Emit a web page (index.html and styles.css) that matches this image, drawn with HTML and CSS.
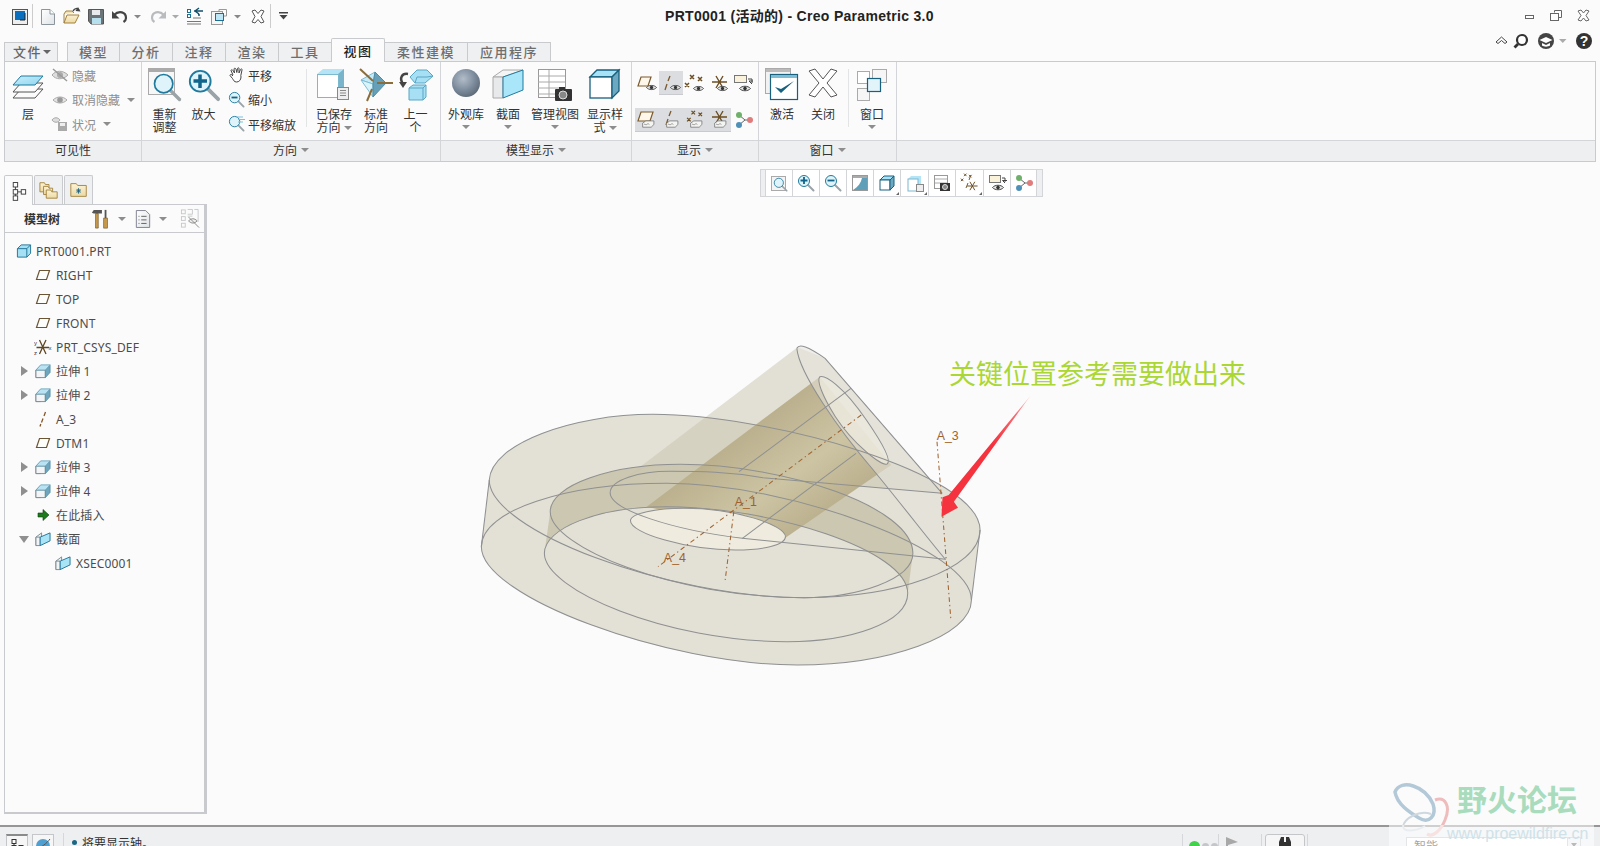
FILE: index.html
```html
<!DOCTYPE html>
<html lang="zh">
<head>
<meta charset="utf-8">
<title>PRT0001 (活动的) - Creo Parametric 3.0</title>
<link rel="stylesheet" href="styles.css">
</head>
<body>
<svg class="defs" aria-hidden="true">
  <defs>
    <linearGradient id="blue" x1="0" y1="0" x2="1" y2="1"><stop offset="0" stop-color="#c9eefb"/><stop offset="1" stop-color="#8fd6f0"/></linearGradient>
    <linearGradient id="paper" x1="0" y1="0" x2="1" y2="1"><stop offset="0" stop-color="#ffffff"/><stop offset="1" stop-color="#dfe3e6"/></linearGradient>
    <linearGradient id="folder" x1="0" y1="0" x2="0" y2="1"><stop offset="0" stop-color="#fdf3d6"/><stop offset="1" stop-color="#ecd9a4"/></linearGradient>
    <radialGradient id="sphere" cx=".4" cy=".35" r=".7"><stop offset="0" stop-color="#b3bdc9"/><stop offset=".6" stop-color="#7c8b9c"/><stop offset="1" stop-color="#5b6774"/></radialGradient>
    <linearGradient id="bandfill" gradientUnits="userSpaceOnUse" x1="780" y1="340" x2="1010" y2="640"><stop offset="0" stop-color="#bbb08e"/><stop offset=".5" stop-color="#ccc4a3"/><stop offset=".9" stop-color="#bbb08e"/></linearGradient>
    <linearGradient id="arrowfill" gradientUnits="userSpaceOnUse" x1="1658" y1="204" x2="1400" y2="560"><stop offset="0" stop-color="#fbd3d3"/><stop offset=".15" stop-color="#f76a70"/><stop offset=".4" stop-color="#f5333f"/><stop offset="1" stop-color="#f5333f"/></linearGradient>

    <symbol id="plane" viewBox="0 0 16 12"><path d="M4.500 1.500H14.500L11.500 10.500H1.500Z" fill="#fdfdfb" stroke="#6b5534" stroke-width="1.200"/></symbol>
    <symbol id="axis" viewBox="0 0 16 16"><path d="M10.500 1L9 5M8 7.500L6.500 11.500M5.800 13L5 15.500" fill="none" stroke="#84592a" stroke-width="1.300"/></symbol>
    <symbol id="csys" viewBox="0 0 18 16"><path d="M5.500 1L12 15M12 1L5.500 15M2.500 8.500H15" fill="none" stroke="#5f4622" stroke-width="1.300"/><text x="0" y="6" class="tiny">y</text><text x="0" y="15.500" class="tiny">z</text><text x="14.500" y="11" class="tiny">x</text></symbol>
    <symbol id="solid" viewBox="0 0 17 17"><path d="M1 7.500L6 3V15.500H1Z" fill="#eef0f1" stroke="#7b8a92"/><path d="M1 7.500H11V15.500H1Z" fill="#f3f4f5" stroke="#7b8a92"/><path d="M11 7.500L16 2V10L11 15.500Z" fill="#6ea6be" stroke="#5d93aa"/><path d="M1 7.500L6 2H16L11 7.500Z" fill="#b9e3f3" stroke="#6ea6be"/></symbol>
    <symbol id="root" viewBox="0 0 17 17"><path d="M1.500 6L5.500 2H15.500V11L11.500 15H1.500Z" fill="#a6e0f4" stroke="#1f7396"/><path d="M11.500 6V15M11.500 6H1.500M11.500 6L15.500 2" fill="none" stroke="#1f7396"/></symbol>
    <symbol id="sect" viewBox="0 0 17 17"><path d="M1 6.500L7 2V11.500L1 15.500Z" fill="#eef0f1" stroke="#7b8a92"/><path d="M1 6.500H5.500V15.500H1Z" fill="#f2f3f4" stroke="#7b8a92"/><path d="M5.500 6.500L16 2V10.500L5.500 15.500Z" fill="#a9e3f6" stroke="#1f7396"/></symbol>
    <symbol id="mag" viewBox="0 0 36 36"><path d="M21 21L33 33" stroke="#9aa3a8" stroke-width="4" stroke-linecap="round"/><circle cx="14" cy="14" r="11" fill="#dff3fa" stroke="#1f7a9e" stroke-width="2"/></symbol>
    <symbol id="eye" viewBox="0 0 12 7"><path d="M.5 3.500C3 .5 9 .5 11.500 3.500C9 6.500 3 6.500 .5 3.500Z" fill="#e8e8e8" stroke="#444"/><circle cx="6" cy="3.500" r="1.800" fill="#333"/></symbol>
    <symbol id="nodes" viewBox="0 0 18 18"><path d="M4 4L10 9L4 14M10 9H15" fill="none" stroke="#666"/><circle cx="4" cy="4" r="3" fill="#6fb06a"/><circle cx="4" cy="14" r="3" fill="#4f90b8"/><circle cx="15" cy="9" r="3" fill="#e07c7c"/></symbol>
    <symbol id="tag" viewBox="0 0 16 10"><path d="M1.500 3.500L5 1H14V5L11 8H1.500Z" fill="#f4f4f2" stroke="#777" stroke-width=".9"/><path d="M3 5C4 4 5 6 6 5S8 4 9 5" fill="none" stroke="#777" stroke-width=".8"/></symbol>
    <symbol id="csysSmall" viewBox="0 0 20 14"><path d="M7 1L14 13M14 1L7 13M3 7H18" fill="none" stroke="#6b4d22" stroke-width="1.400"/></symbol>
    <symbol id="xpts" viewBox="0 0 20 16"><path d="M6 1L10 5M10 1L6 5M14 3L18 7M18 3L14 7M1 9L5 13M5 9L1 13" fill="none" stroke="#6b4d22" stroke-width="1.500"/></symbol>
  </defs>
</svg>
<div class="app">

  <header class="titlebar">
    <svg class="qat" viewBox="0 0 300 34" width="300" height="34" aria-label="快速访问工具栏">
      <rect x="12.500" y="9.500" width="15" height="15" fill="#eee" stroke="#555"/>
      <rect x="15" y="11" width="10" height="9" fill="#0b6fc0"/>
      <path d="M20 20H25V13" fill="none" stroke="#222"/>
      <path d="M32.500 4V28" stroke="#ccc"/>
      <path d="M41.500 9.500H50L54.500 14V24.500H41.500Z" fill="url(#paper)" stroke="#8b959b"/>
      <path d="M50 9.500V14H54.500" fill="#fff" stroke="#8b959b"/>
      <path d="M64 14V23H75L79 15H67L64 23" fill="url(#folder)" stroke="#a2823d"/>
      <path d="M64 14L66 11H72L74 13" fill="#f3e4b5" stroke="#a2823d"/>
      <path d="M73 11C75 8 77 8 79 10" fill="none" stroke="#444" stroke-width="1.500"/>
      <path d="M78 7L80.500 11.500L75.500 11Z" fill="#444"/>
      <path d="M88.500 9.500H103.500V24H91L88.500 21Z" fill="#6b7479" stroke="#555"/>
      <rect x="92" y="10" width="8" height="5" fill="#e8ebed"/>
      <rect x="92" y="18" width="9" height="6" fill="#b7e0ef"/>
      <path d="M114 15C119 10 126 12 126 18C126 20 125 21 123.500 22" fill="none" stroke="#444" stroke-width="2.200"/>
      <path d="M112 11V18.500H119.500Z" fill="#444"/>
      <path d="M134 15H141L137.500 18.500Z" fill="#888"/>
      <path d="M164 15C159 10 152 12 152 18C152 20 153 21 154.500 22" fill="none" stroke="#b9bcbf" stroke-width="2.200"/>
      <path d="M166 11V18.500H158.500Z" fill="#b9bcbf"/>
      <path d="M172 15H179L175.500 18.500Z" fill="#aaa"/>
      <g fill="#fff" stroke="#1c6f94"><rect x="187.500" y="9.500" width="3" height="3"/><rect x="187.500" y="14.500" width="3" height="3"/></g>
      <path d="M194 11H203M199 8L195 11L199 14M198 15H200" fill="none" stroke="#15506b" stroke-width="1.400"/>
      <path d="M193 18H201M187 21.500H201M187 24H201" stroke="#777"/>
      <rect x="211.500" y="11.500" width="11" height="13" fill="#f6f6f6" stroke="#999"/>
      <rect x="215.500" y="13.500" width="8" height="7" fill="#bfe6f4" stroke="#1c6f94"/>
      <path d="M219 11.500V9.500H226.500V16H224" fill="none" stroke="#999"/>
      <path d="M234 15H241L237.500 18.500Z" fill="#888"/>
      <path d="M252 11L255 10L258 13.500L261 10L264 11L261 16.500L264 22L261 23L258 19.500L255 23L252 22L255 16.500Z" fill="#fff" stroke="#555"/>
      <path d="M270.500 4V28" stroke="#ccc"/>
      <path d="M279 12H288V13.500H279ZM279.500 15H287.500L283.500 19.500Z" fill="#444"/>
    </svg>
    <h1 class="title">PRT0001 (活动的) - Creo Parametric 3.0</h1>
    <svg class="winctl" viewBox="0 0 90 34" width="90" height="34" aria-label="窗口控制">
      <rect x="15.500" y="15.500" width="8" height="3" fill="#fff" stroke="#666"/>
      <path d="M44.500 12.500V10.500H51.500V17.500H49" fill="#fff" stroke="#666"/>
      <rect x="40.500" y="13.500" width="8" height="7" fill="#fff" stroke="#666"/>
      <path d="M68 11L71 10L73.500 13L76 10L79 11L76 15.500L79 20L76 21L73.500 18L71 21L68 20L71 15.500Z" fill="#fff" stroke="#666"/>
    </svg>
  </header>

  <nav class="tabbar">
    <div class="tab tab-file">文件<i class="caret caret-file"></i></div>
    <div class="tabs">
      <div class="tab">模型</div>
      <div class="tab">分析</div>
      <div class="tab">注释</div>
      <div class="tab">渲染</div>
      <div class="tab">工具</div>
      <div class="tab tab-active">视图</div>
      <div class="tab tab-wide">柔性建模</div>
      <div class="tab tab-wide">应用程序</div>
    </div>
    <svg class="helpers" viewBox="0 0 100 22" width="100" height="22" aria-label="帮助工具">
      <path d="M0 11L5.500 6L11 11L9 12.500L5.500 9.500L2 12.500Z" fill="#fff" stroke="#444"/>
      <circle cx="26" cy="9" r="5" fill="#fff" stroke="#333" stroke-width="2.200"/>
      <path d="M22 13L18.500 16.500" stroke="#333" stroke-width="2.800"/>
      <circle cx="50" cy="10" r="8" fill="#444"/>
      <path d="M43.500 9L50 6L56.500 9L50 12Z" fill="#fff"/>
      <path d="M46 12V14.500C48 16 52 16 54 14.500V12L50 14Z" fill="#fff"/>
      <path d="M63 8H70.500L66.750 12Z" fill="#aaa"/>
      <circle cx="88" cy="10" r="8" fill="#333"/>
      <text x="88" y="14.500" class="helpmark">?</text>
    </svg>
  </nav>

  <section class="ribbon">
    <div class="group g-vis">
      <div class="group-body">
        <div class="big w40">
          <svg class="ico" viewBox="0 0 34 34" width="34" height="34"><path d="M10 21H32L24 30H2Z" fill="none" stroke="#555"/><path d="M10 15H32L24 24H2Z" fill="#fbfbfc" stroke="#555"/><path d="M10 8H32L24 17H2Z" fill="url(#blue)" stroke="#1f7a9e"/></svg>
          <div class="lbl">层</div>
        </div>
        <div class="smalls">
          <div class="small dim"><svg viewBox="0 0 18 14" width="18" height="14"><path d="M1 7C5 2 12 2 17 7C12 12 5 12 1 7Z" fill="#ddd" stroke="#aaa"/><circle cx="9" cy="7" r="3" fill="#aaa"/><path d="M2 1L16 13" stroke="#999" stroke-width="1.500"/></svg><span>隐藏</span></div>
          <div class="small dim"><svg viewBox="0 0 18 14" width="18" height="14"><path d="M2 7C6 3 12 3 16 7C12 11 6 11 2 7Z" fill="#e4e4e4" stroke="#aaa"/><circle cx="9" cy="7" r="2.800" fill="#999"/></svg><span>取消隐藏</span><i class="caret"></i></div>
          <div class="small dim"><svg viewBox="0 0 18 16" width="18" height="16"><path d="M1 4C3 1 7 1 9 4C7 7 3 7 1 4Z" fill="#ddd" stroke="#aaa"/><rect x="7" y="6" width="9" height="9" fill="#aaa"/><rect x="9" y="7" width="5" height="3" fill="#eee"/></svg><span>状况</span><i class="caret"></i></div>
        </div>
      </div>
      <div class="group-label">可见性</div>
    </div>

    <div class="group g-dir">
      <div class="group-body">
        <div class="big w39 first">
          <svg class="ico" viewBox="0 0 34 34" width="34" height="34"><rect x=".5" y=".5" width="26" height="26" fill="#f7f7f7" stroke="#aaa"/><rect x="1" y="1" width="25" height="3" fill="#aaa"/><use href="#mag" x="4" y="4" width="30" height="30"/></svg>
          <div class="lbl">重新<br>调整</div>
        </div>
        <div class="big w39">
          <svg class="ico" viewBox="0 0 34 34" width="34" height="34"><use href="#mag" x="0" y="0" width="34" height="34"/><path d="M13 6.500V20M6.500 13H20" stroke="#11648a" stroke-width="3.500"/></svg>
          <div class="lbl">放大</div>
        </div>
        <div class="smalls pan">
          <div class="small"><svg viewBox="0 0 18 18" width="18" height="18"><path d="M5 9L3 4.500C3 3.500 4.500 3.500 5 4.500L6.500 7L6 3C6 2 7.500 2 8 3L8.800 6.500L9.500 2.500C9.800 1.500 11 1.500 11 2.500V7L12.500 3.500C13 2.500 14.500 3 14 4L12.800 9.500L13 11C13 14 11 16 8.500 16C6 16 5.500 14 4.500 12.500L2 9.500C2 8.500 3 8 4 9L5 10" fill="#fff" stroke="#444"/></svg><span>平移</span></div>
          <div class="small"><svg viewBox="0 0 18 18" width="18" height="18"><use href="#mag" x="0" y="0" width="17" height="17"/><path d="M3.500 6.500H9.500" stroke="#11648a" stroke-width="1.800"/></svg><span>缩小</span></div>
          <div class="small"><svg viewBox="0 0 18 18" width="18" height="18"><use href="#mag" x="0" y="0" width="17" height="17"/><path d="M8 2H15M10 4.500H17M10 7H15" stroke="#7cc1da"/></svg><span>平移缩放</span></div>
        </div>
        <i class="vsep"></i>
        <div class="big w42">
          <svg class="ico" viewBox="0 0 36 34" width="36" height="34"><path d="M1 6L7 1H28V26H24V6Z" fill="#b4e4f5"/><path d="M22 6L28 1V26H22Z" fill="#79b4cb"/><rect x="1.500" y="6.500" width="21" height="23" fill="#fff" stroke="#7db8cf"/><rect x="21.500" y="19.500" width="11" height="12" fill="#eee" stroke="#888"/><path d="M24 22.500H30M24 25H30M24 27.500H30" stroke="#888"/></svg>
          <div class="lbl">已保存<br>方向<i class="caret caret-in"></i></div>
        </div>
        <div class="big w42">
          <svg class="ico" viewBox="0 0 36 34" width="36" height="34"><path d="M3 12L17 4L15 16Z" fill="#c5ebf8" stroke="#7fbcd3"/><path d="M3 12L15 16V29Z" fill="#d9f3fb" stroke="#7fbcd3"/><path d="M17 4L28 15L15 29V16Z" fill="#659fb8" stroke="#4f8ca6"/><path d="M2 1L15 13" stroke="#8a6d3b" stroke-width="2"/><path d="M19 15H35" stroke="#8a6d3b" stroke-width="2"/><path d="M14 21L9 33" stroke="#8a6d3b" stroke-width="2"/></svg>
          <div class="lbl">标准<br>方向</div>
        </div>
        <div class="big w37">
          <svg class="ico" viewBox="0 0 36 34" width="36" height="34"><path d="M12 9L19 2H29L35 8L27 15H17Z" fill="#a7e0f5" stroke="#5aa7c4"/><path d="M19 9H29L35 8M19 9L17 15" fill="none" stroke="#5aa7c4"/><path d="M11 20L15 17H28V29L25 32H11Z" fill="#a7e0f5" stroke="#5aa7c4"/><path d="M11 20H25V32M25 20L28 17" fill="none" stroke="#5aa7c4"/><path d="M5 16C1 10 4 5 10 6" fill="none" stroke="#444" stroke-width="2.500"/><path d="M1 14L9 14L5 20Z" fill="#444"/></svg>
          <div class="lbl">上一<br>个</div>
        </div>
      </div>
      <div class="group-label">方向<i class="caret"></i></div>
    </div>

    <div class="group g-model">
      <div class="group-body">
        <div class="big w42 first5">
          <svg class="ico" viewBox="0 0 34 34" width="34" height="34"><circle cx="17" cy="15" r="14" fill="url(#sphere)"/></svg>
          <div class="lbl">外观库<i class="caret caret-block"></i></div>
        </div>
        <div class="big w42">
          <svg class="ico" viewBox="0 0 34 34" width="34" height="34"><path d="M2 9L12 2H32L12 9Z" fill="#f5f5f5" stroke="#aaa"/><path d="M2 9H12V30H2Z" fill="#e8e9ea" stroke="#aaa"/><path d="M12 9L32 2V22L12 30Z" fill="#a9e6fa" stroke="#1f7a9e"/></svg>
          <div class="lbl">截面<i class="caret caret-block"></i></div>
        </div>
        <div class="big w52">
          <svg class="ico" viewBox="0 0 36 34" width="36" height="34"><rect x="1.500" y="1.500" width="27" height="28" fill="#fff" stroke="#999"/><path d="M1 8H28M1 14H28M1 20H28M1 26H28M12 2V29" stroke="#aaa"/><rect x="18" y="21" width="17" height="12" rx="1" fill="#333"/><rect x="22" y="19" width="6" height="3" fill="#333"/><circle cx="26" cy="27" r="4" fill="#888" stroke="#ddd"/></svg>
          <div class="lbl">管理视图<i class="caret caret-block"></i></div>
        </div>
        <div class="big w48">
          <svg class="ico" viewBox="0 0 34 34" width="34" height="34"><path d="M2 9L9 2H31L24 9Z" fill="#a8e2f6" stroke="#17607e" stroke-width="1.300"/><rect x="2" y="9" width="22" height="21" fill="#fff" stroke="#17607e" stroke-width="1.300"/><path d="M24 9L31 2V23L24 30Z" fill="#6ca9c0" stroke="#17607e" stroke-width="1.300"/></svg>
          <div class="lbl">显示样<br>式<i class="caret caret-in"></i></div>
        </div>
      </div>
      <div class="group-label">模型显示<i class="caret"></i></div>
    </div>

    <div class="group g-disp">
      <div class="group-body disp-grid">
        <div class="dcell"><svg viewBox="0 0 24 24" width="24" height="24"><path d="M6 6H16L13 15H3Z" fill="#fff8ea" stroke="#7a5a2e" stroke-width="1.200"/><use href="#eye" x="11" y="13" width="11" height="7"/></svg></div>
        <div class="dcell on"><svg viewBox="0 0 24 24" width="24" height="24"><path d="M11 5L9 10M8 13L6 19" stroke="#7a5a2e" stroke-width="1.300"/><use href="#eye" x="11" y="13" width="11" height="7"/></svg></div>
        <div class="dcell"><svg viewBox="0 0 24 24" width="24" height="24"><use href="#xpts" x="1" y="3" width="20" height="16"/><use href="#eye" x="10" y="14" width="11" height="7"/></svg></div>
        <div class="dcell"><svg viewBox="0 0 24 24" width="24" height="24"><use href="#csysSmall" x="2" y="4" width="20" height="14"/><use href="#eye" x="10" y="14" width="11" height="7"/></svg></div>
        <div class="dcell"><svg viewBox="0 0 24 24" width="24" height="24"><rect x="3.500" y="4.500" width="12" height="7" fill="#fbf2dc" stroke="#777"/><path d="M17 8H21V12M21 13L18 10H22" fill="none" stroke="#444"/><use href="#eye" x="8" y="14" width="12" height="7"/></svg></div>
        <div class="dcell on"><svg viewBox="0 0 24 24" width="24" height="24"><path d="M6 4H18L15 13H3Z" fill="#fff8ea" stroke="#7a5a2e" stroke-width="1.200"/><use href="#tag" x="6" y="12" width="15" height="9"/></svg></div>
        <div class="dcell on"><svg viewBox="0 0 24 24" width="24" height="24"><path d="M12 3L10 8M9 11L7 17" stroke="#7a5a2e" stroke-width="1.300"/><use href="#tag" x="6" y="12" width="15" height="9"/></svg></div>
        <div class="dcell on"><svg viewBox="0 0 24 24" width="24" height="24"><use href="#xpts" x="2" y="2" width="20" height="14"/><use href="#tag" x="6" y="12" width="15" height="9"/></svg></div>
        <div class="dcell on"><svg viewBox="0 0 24 24" width="24" height="24"><use href="#csysSmall" x="2" y="2" width="20" height="14"/><use href="#tag" x="6" y="12" width="15" height="9"/></svg></div>
        <div class="dcell"><svg viewBox="0 0 24 24" width="24" height="24"><use href="#nodes" x="4" y="3" width="18" height="18"/></svg></div>
      </div>
      <div class="group-label">显示<i class="caret"></i></div>
    </div>

    <div class="group g-win">
      <div class="group-body">
        <div class="big w42 first2">
          <svg class="ico" viewBox="0 0 34 34" width="34" height="34"><rect x=".5" y=".5" width="25" height="25" fill="#f2f2f2" stroke="#aaa"/><rect x="1" y="1" width="24" height="3" fill="#bbb"/><rect x="5.500" y="6.500" width="27" height="25" fill="#fff" stroke="#17607e" stroke-width="1.200"/><rect x="6" y="7" width="26" height="3" fill="#7fbcd3"/><path d="M10 19L16 25L29 13L16 21Z" fill="#17607e"/></svg>
          <div class="lbl">激活</div>
        </div>
        <div class="big w40">
          <svg class="ico" viewBox="0 0 34 34" width="34" height="34"><path d="M3 3L9 1L17 11L25 1L31 3L21 15L31 27L25 29L17 19L9 29L3 27L13 15Z" fill="#fff" stroke="#555"/></svg>
          <div class="lbl">关闭</div>
        </div>
        <i class="vsep vsep-win"></i>
        <div class="big w40">
          <svg class="ico" viewBox="0 0 34 34" width="34" height="34"><rect x="2.500" y="3.500" width="12" height="12" fill="#fff" stroke="#aaa"/><rect x="17.500" y="1.500" width="14" height="13" fill="#f6f6f6" stroke="#aaa"/><rect x="2.500" y="20.500" width="12" height="12" fill="#f6f6f6" stroke="#aaa"/><rect x="12.500" y="10.500" width="13" height="13" fill="#e2f3fa" stroke="#17607e" stroke-width="1.200"/></svg>
          <div class="lbl">窗口<i class="caret caret-block"></i></div>
        </div>
      </div>
      <div class="group-label">窗口<i class="caret"></i></div>
    </div>
    <div class="group group-rest">
      <div class="group-body"></div>
      <div class="group-label"></div>
    </div>
  </section>

  <main class="main">
    <aside class="side">
      <div class="sidetabs">
        <div class="stab stab-on"><svg viewBox="0 0 18 22" width="16" height="20"><path d="M5 4V19M5 12H12" stroke="#333"/><rect x="2.500" y="1.500" width="5" height="5" fill="#fff" stroke="#333"/><rect x="2.500" y="9.500" width="5" height="5" fill="#fff" stroke="#333"/><rect x="2.500" y="16.500" width="5" height="5" fill="#fff" stroke="#333"/><rect x="11.500" y="9.500" width="5" height="5" fill="#fff" stroke="#333"/></svg></div>
        <div class="stab"><svg viewBox="0 0 22 22" width="20" height="20"><path d="M1 3H6L7 5H11V13H1Z" fill="url(#folder)" stroke="#a2823d"/><path d="M5 7H10L11 9H15V16H5Z" fill="url(#folder)" stroke="#a2823d"/><path d="M8 11H13L14 13H20V20H8Z" fill="url(#folder)" stroke="#a2823d"/></svg></div>
        <div class="stab"><svg viewBox="0 0 22 22" width="20" height="20"><path d="M2 4H8L9.500 6H19V18H2Z" fill="url(#folder)" stroke="#a2823d"/><path d="M10.500 9V15M8 12H13M8.500 10L12.500 14M12.500 10L8.500 14" stroke="#17607e"/></svg></div>
      </div>
      <div class="treebox">
        <div class="treehead">
          <strong class="treetitle">模型树</strong>
          <svg class="tool" viewBox="0 0 22 22" width="20" height="22"><path d="M5 5H8V21H5Z" fill="#c79a4b" stroke="#6d5326" stroke-width=".7"/><path d="M1 4L3 1H12V5H3Z" fill="#555"/><path d="M15 1H17V10H15Z" fill="#555"/><rect x="14" y="10" width="4" height="11" fill="#c79a4b" stroke="#6d5326" stroke-width=".7"/></svg>
          <i class="caret tc1"></i>
          <svg class="tool tool2" viewBox="0 0 18 22" width="16" height="20"><path d="M1.500 1.500H12L16.500 6V20.500H1.500Z" fill="url(#paper)" stroke="#778"/><path d="M4 8H5M7 8H13M4 12H5M7 12H13M4 16H5M7 16H13" stroke="#555"/></svg>
          <i class="caret tc2"></i>
          <svg class="tool tool3" viewBox="0 0 22 22" width="21" height="22"><g fill="none" stroke="#c6c9cb"><rect x="1.500" y="1.500" width="4" height="4"/><rect x="1.500" y="8.500" width="4" height="4"/><rect x="1.500" y="15.500" width="4" height="4"/><path d="M8 1H13V6H8M15 1H19V14M8 8H13"/></g><path d="M9 13C12 10 15 10 18 13C15 16 12 16 9 13Z" fill="#eee" stroke="#888"/><path d="M9 9L20 20" stroke="#888"/></svg>
        </div>
        <ul class="tree">
          <li class="row lv0"><svg class="ti" width="16" height="16"><use href="#root"/></svg><span>PRT0001.PRT</span></li>
          <li class="row lv1"><svg class="ti" width="16" height="12"><use href="#plane"/></svg><span>RIGHT</span></li>
          <li class="row lv1"><svg class="ti" width="16" height="12"><use href="#plane"/></svg><span>TOP</span></li>
          <li class="row lv1"><svg class="ti" width="16" height="12"><use href="#plane"/></svg><span>FRONT</span></li>
          <li class="row lv1"><svg class="ti ti-c" width="18" height="16"><use href="#csys"/></svg><span>PRT_CSYS_DEF</span></li>
          <li class="row lv1 has"><i class="tri"></i><svg class="ti" width="16" height="16"><use href="#solid"/></svg><span>拉伸 1</span></li>
          <li class="row lv1 has"><i class="tri"></i><svg class="ti" width="16" height="16"><use href="#solid"/></svg><span>拉伸 2</span></li>
          <li class="row lv1"><svg class="ti" width="16" height="16"><use href="#axis"/></svg><span>A_3</span></li>
          <li class="row lv1"><svg class="ti" width="16" height="12"><use href="#plane"/></svg><span>DTM1</span></li>
          <li class="row lv1 has"><i class="tri"></i><svg class="ti" width="16" height="16"><use href="#solid"/></svg><span>拉伸 3</span></li>
          <li class="row lv1 has"><i class="tri"></i><svg class="ti" width="16" height="16"><use href="#solid"/></svg><span>拉伸 4</span></li>
          <li class="row lv1"><svg class="ti" viewBox="0 0 16 16" width="16" height="16"><path d="M3 6H8V2.500L14 8L8 13.500V10H3Z" fill="#1d7a1d" stroke="#0c3f0c" stroke-width=".6"/></svg><span>在此插入</span></li>
          <li class="row lv1 has"><i class="tri tri-open"></i><svg class="ti" width="16" height="16"><use href="#sect"/></svg><span>截面</span></li>
          <li class="row lv2"><svg class="ti" width="16" height="16"><use href="#sect"/></svg><span>XSEC0001</span></li>
        </ul>
      </div>
    </aside>

    <div class="canvas">
      <div class="minibar">
        <i class="grip"></i>
        <div class="mini"><svg viewBox="0 0 20 20" width="20" height="20"><rect x="2.500" y="3.500" width="14" height="14" fill="#f4f4f4" stroke="#aaa"/><use href="#mag" x="4" y="4" width="15" height="15"/></svg></div>
        <div class="mini"><svg viewBox="0 0 20 20" width="20" height="20"><use href="#mag" x="1" y="1" width="18" height="18"/><path d="M8 4V11M4.500 7.500H11.500" stroke="#11648a" stroke-width="1.800"/></svg></div>
        <div class="mini"><svg viewBox="0 0 20 20" width="20" height="20"><use href="#mag" x="1" y="1" width="18" height="18"/><path d="M4.500 7.500H11.500" stroke="#11648a" stroke-width="1.800"/></svg></div>
        <div class="mini"><svg viewBox="0 0 20 20" width="20" height="20"><rect x="2.500" y="2.500" width="15" height="15" fill="#fff" stroke="#999"/><path d="M3 17C8 14 11 10 12 5H17V17Z" fill="#5f9fb8"/><rect x="3" y="3" width="14" height="2" fill="#aaa"/></svg></div>
        <div class="mini"><svg viewBox="0 0 20 20" width="20" height="20"><path d="M3 7L7 3H17L13 7Z" fill="#a8e2f6" stroke="#17607e"/><rect x="3" y="7" width="10" height="10" fill="#fff" stroke="#17607e"/><path d="M13 7L17 3V13L13 17Z" fill="#6ca9c0" stroke="#17607e"/></svg><i class="corner"></i></div>
        <div class="mini m-wide"><svg viewBox="0 0 20 20" width="20" height="20"><path d="M3 6L6 3H16V13H13V6Z" fill="#b4e4f5"/><rect x="3" y="6" width="10" height="12" fill="#fff" stroke="#7db8cf"/><rect x="11.500" y="11.500" width="7" height="7" fill="#eee" stroke="#888"/></svg><i class="corner"></i></div>
        <div class="mini"><svg viewBox="0 0 20 20" width="20" height="20"><rect x="2.500" y="2.500" width="13" height="13" fill="#fff" stroke="#999"/><path d="M3 6H15M3 10H15" stroke="#aaa"/><rect x="8" y="10" width="10" height="8" fill="#333"/><circle cx="13" cy="14" r="2.500" fill="#888" stroke="#ddd"/></svg></div>
        <div class="mini m-wide"><svg viewBox="0 0 20 20" width="20" height="20"><use href="#xpts" x="0" y="0" width="13" height="10"/><path d="M11 2L9 7M8 10L6 15" stroke="#7a5a2e"/><use href="#csysSmall" x="5" y="8" width="14" height="10"/></svg><i class="corner"></i></div>
        <div class="mini"><svg viewBox="0 0 20 20" width="20" height="20"><rect x="2.500" y="2.500" width="11" height="7" fill="#fbf2dc" stroke="#777"/><path d="M15 5H18V9M18 10L15.500 7.500H20" fill="none" stroke="#444"/><use href="#eye" x="5" y="11" width="12" height="7"/></svg></div>
        <div class="mini"><svg viewBox="0 0 20 20" width="20" height="20"><use href="#nodes" x="1" y="1" width="18" height="18"/></svg></div>
        <i class="grip"></i>
      </div>

      <svg class="scene" viewBox="207 162 1393 663" aria-label="模型视图">
        <g transform="translate(460 330) scale(.3444 .33333)">
          <path class="solid" d="M85,450 L62,650 C62,800 600,1005 980,1005 C1240,1005 1485,920 1485,810 L1510,600 C1510,430 900,253 560,253 C330,253 90,340 85,450 Z"/>
          <path class="wall" fill-rule="evenodd" d="M262,545 C262,465 440,403 640,403 C940,403 1315,530 1315,670 L1300,790 C1300,660 900,530 600,530 C400,530 245,595 245,670 Z"/>
          <path class="tube" d="M980,52 L1060,85 L1400,490 L880,443 L640,403 L540,410 L473,450 Z"/>
          <path class="tube-in" d="M1045,140 L1252,405 L944,624 L542,530 Z"/>
          <path class="hole" d="M495,572 C495,550 570,535 650,535 C800,535 945,585 945,620 C945,645 880,660 800,660 C660,660 495,610 495,572 Z"/>
          <path class="tube-end" d="M978,55 C985,40 1010,50 1060,85 L1400,490 L1410,688 C1400,680 1280,520 1200,420 C1100,300 985,130 978,55 Z"/>
          <path class="tube-cap" d="M1045,140 C1060,135 1110,165 1180,270 C1240,360 1250,395 1240,402 C1225,410 1140,340 1090,260 C1050,195 1035,150 1045,140 Z"/>
          <g class="edges">
            <path d="M85,450 L62,650"/>
            <path d="M1510,600 L1485,810"/>
            <path d="M85,450 C90,340 330,253 560,253 C900,253 1510,430 1510,600 C1510,720 1260,803 1000,803 C600,803 85,600 85,450 Z"/>
            <path d="M62,650 C62,540 310,460 600,460 C960,460 1485,660 1485,810 C1485,920 1240,1005 980,1005 C600,1005 62,800 62,650 Z"/>
            <path d="M262,545 C262,465 440,403 640,403 C940,403 1315,530 1315,670 C1315,750 1150,803 1000,803 C620,803 262,650 262,545 Z"/>
            <path d="M245,670 C245,595 400,530 600,530 C900,530 1300,660 1300,790 C1300,880 1130,935 950,935 C600,935 245,780 245,670 Z"/>
            <path d="M1400,490 L880,443 C780,425 700,424 610,424 C520,424 436,450 436,488 C436,540 620,600 820,625 L1410,688"/>
            <path d="M495,572 C495,550 570,535 650,535 C800,535 945,585 945,620 C945,645 880,660 800,660 C660,660 495,610 495,572 Z"/>
            <path d="M978,55 C985,40 1010,50 1060,85 L1400,490"/>
            <path d="M978,55 C985,130 1100,300 1200,420 C1280,520 1400,680 1410,688"/>
            <path d="M1045,140 C1060,135 1110,165 1180,270 C1240,360 1250,395 1240,402 C1225,410 1140,340 1090,260 C1050,195 1035,150 1045,140 Z"/>
            <path d="M1135,175 L810,425"/>
            <path d="M1150,370 L820,625"/>
          </g>
          <g class="axes">
            <path d="M1165,255 L575,710"/>
            <path d="M795,545 L770,750"/>
            <path d="M1385,335 L1425,865"/>
          </g>
          <text class="axlbl" x="798" y="528">A_1</text>
          <text class="axlbl" x="592" y="696">A_4</text>
          <text class="axlbl" x="1384" y="330">A_3</text>
          <path class="arrow" d="M1658,195 L1419,495 L1401,502 L1398,560 L1446,533 L1434,515 Z"/>
        </g>
      </svg>
      <div class="note">关键位置参考需要做出来</div>
    </div>
  </main>

  <footer class="status">
    <div class="st-left">
      <div class="st-btn st-on"><svg viewBox="0 0 16 16" width="16" height="16"><path d="M5 3V14M5 9H11" stroke="#333"/><rect x="3" y="1.500" width="4" height="4" fill="#fff" stroke="#333"/><rect x="3" y="7.500" width="4" height="4" fill="#fff" stroke="#333"/><rect x="10" y="7.500" width="4" height="4" fill="#fff" stroke="#333"/></svg></div>
      <div class="st-btn"><svg viewBox="0 0 16 16" width="16" height="16"><circle cx="8" cy="9" r="7" fill="#4f9fd0"/><path d="M1 12C6 11 12 6 15 2" fill="none" stroke="#555"/></svg></div>
      <i class="st-sep"></i>
      <i class="bullet"></i>
      <span class="msg">将要显示轴。</span>
    </div>
    <div class="st-right">
      <i class="st-sep"></i>
      <div class="lights"><i class="l-on"></i><i></i><i></i></div>
      <i class="st-sep"></i>
      <svg class="flag" viewBox="0 0 14 14" width="14" height="14"><path d="M1 1L13 6L3 9V14H1Z" fill="#a8a8a8"/></svg>
      <i class="st-sep sep-b"></i>
      <div class="binoc"><svg viewBox="0 0 16 14" width="16" height="14"><path d="M2 5L4 0H7V5H9V0H12L14 5V14H9V9H7V14H2Z" fill="#333"/></svg></div>
      <i class="st-sep"></i>
      <div class="select"><span>智能</span><b class="sel-btn"><i class="caret"></i></b></div>
    </div>
  </footer>

  <div class="watermark">
    <svg class="wm-logo" viewBox="0 0 60 60" width="60" height="60"><path d="M4 10C10 -4 34 4 42 22C46 34 38 42 28 36C18 30 6 22 4 10Z" fill="none" stroke="#b3c9d8" stroke-width="3.500"/><path d="M44 18C54 14 60 24 54 38C50 48 42 56 36 52" fill="none" stroke="#eebcbc" stroke-width="3"/><path d="M40 32C28 28 14 36 12 44C12 50 24 50 34 44" fill="none" stroke="#cfd8de" stroke-width="2"/></svg>
    <div class="wm-text">野火论坛</div>
    <div class="wm-url">www.proewildfire.cn</div>
  </div>
</div>
</body>
</html>
```
FILE: styles.css
```css
* { box-sizing: border-box; }
html, body { margin: 0; padding: 0; }
body {
  width: 1600px; height: 846px; overflow: hidden; background: #fbfbfc;
  font-family: "Noto Sans CJK SC", "Noto Sans", sans-serif; font-size: 12px; color: #333;
}
.defs { display: block; width: 0; height: 0; position: absolute; }
.tiny { font: 6px "Liberation Sans", sans-serif; fill: #333; }
.helpmark { font: bold 14px "Liberation Sans", sans-serif; fill: #fff; text-anchor: middle; }
.app { position: relative; width: 1600px; height: 846px; display: flex; flex-direction: column; overflow: hidden; }

.titlebar { height: 38px; display: grid; grid-template-columns: 1fr auto 1fr; align-items: start; }
.qat { display: block; }
.winctl { display: block; justify-self: end; }
.title {
  margin: 8px 0 0; font: bold 14px/17px "Liberation Sans", "Noto Sans CJK SC", sans-serif;
  color: #222; width: 270px; white-space: nowrap; letter-spacing: .3px;
}

.tabbar { height: 23px; display: flex; align-items: flex-end; padding-left: 4px; position: relative; z-index: 2; }
.tabs { display: flex; margin-left: 9px; align-items: flex-end; height: 23px; }
.tab {
  width: 53px; height: 19px; display: flex; align-items: center; justify-content: center; padding-bottom: 1px;
  background: #eff0f2; border: 1px solid #c8cacd; border-bottom: 0; border-left-width: 0;
  font-size: 13px; line-height: 17px; letter-spacing: 1.5px; color: #6e6e6e; font-weight: 500;
}
.tab:first-child { border-left-width: 1px; }
.tab-file { width: 54px; border-left-width: 1px; color: #666; justify-content: flex-start; padding-left: 8px; }
.tab-wide { width: 83px; }
.tab-active {
  height: 24px; background: #fbfbfc; color: #222; margin-bottom: -1px; padding-bottom: 1px;
  border-left-width: 1px; border-radius: 2px 2px 0 0; margin-left: -1px; width: 54px;
}
.helpers { display: block; margin-left: auto; margin-right: 4px; margin-bottom: 8px; }

.caret {
  display: inline-block; width: 0; height: 0; border-left: 4px solid transparent; border-right: 4px solid transparent;
  border-top: 4px solid #8d8d8d; margin-left: 4px; vertical-align: middle;
}
.caret-file { margin-left: 1px; border-top-color: #666; }
.caret-in { margin-left: 3px; }
.caret-block { display: block; margin: 4px auto 0; }

.ribbon {
  height: 101px; margin: 0 4px; display: flex; border: 1px solid #c8cacd; background: #fbfbfc; flex: none;
}
.group { display: flex; flex-direction: column; border-right: 1px solid #d3d5d8; flex: none; }
.group-rest { flex: 1; border-right: 0; }
.g-vis { width: 137px; }
.g-dir { width: 299px; }
.g-model { width: 191px; }
.g-disp { width: 127px; }
.g-win { width: 138px; }
.group-body { height: 78px; display: flex; align-items: flex-start; flex: none; }
.group-label {
  height: 21px; background: #eeeff1; border-top: 1px solid #d3d5d8; flex: none; padding-bottom: 3px;
  display: flex; align-items: center; justify-content: center; font-size: 12px; line-height: 17px; color: #333;
}
.big { display: flex; flex-direction: column; align-items: center; flex: none; padding-top: 6px; }
.ico { display: block; flex: none; }
.lbl { margin-top: 6px; font-size: 12px; line-height: 12.500px; text-align: center; white-space: nowrap; color: #333; }
.w37 { width: 37px; } .w39 { width: 39px; } .w40 { width: 40px; } .w42 { width: 42px; } .w48 { width: 48px; } .w52 { width: 52px; }
.g-vis .big { margin-left: 3px; }
.first { margin-left: 3px; }
.first5 { margin-left: 4px; }
.first2 { margin-left: 2px; }
.smalls { display: flex; flex-direction: column; padding-top: 1px; width: 90px; flex: none; }
.small { height: 24.500px; display: flex; align-items: center; gap: 3px; white-space: nowrap; color: #333; flex: none; }
.small svg { display: block; flex: none; }
.dim { color: #8e8e8e; }
.g-vis .small { margin-left: 3px; }
.pan { width: 83px; padding-left: 5px; }
.pan .small { gap: 2px; }
.vsep { display: block; width: 1px; height: 58px; margin: 7px 6px 0 0; background: #e3e4e6; flex: none; }
.vsep-win { margin: 7px 3px 0 5px; }
.disp-grid { display: grid; grid-template-columns: repeat(5, 24px); grid-template-rows: 24px 24px; row-gap: 13px; padding: 9px 0 0 3px; }
.dcell { width: 24px; height: 24px; display: flex; align-items: center; justify-content: center; }
.dcell svg { display: block; }
.on { background: #dcdde0; box-shadow: inset 0 -1px 0 #c8cacd; }

.main { flex: 1; display: flex; min-height: 0; }
.side { width: 203px; flex: none; margin-left: 4px; display: flex; flex-direction: column; padding-top: 13px; padding-bottom: 11px; }
.sidetabs { display: flex; height: 29px; gap: 1px; flex: none; }
.stab {
  width: 29px; height: 29px; background: #eff0f2; border: 1px solid #c8cacd; border-bottom: 0; border-radius: 2px 2px 0 0;
  display: flex; align-items: center; justify-content: center;
}
.stab svg { display: block; }
.stab-on { background: #fbfbfc; position: relative; z-index: 1; height: 30px; margin-bottom: -1px; }
.treebox { flex: 1; border: 1px solid #c8cacd; border-width: 1px 3px 2px 1px; background: #fbfbfc; width: 203px; }
.treehead { height: 28px; display: flex; align-items: center; border-bottom: 1px solid #c8cacd; padding-left: 19px; }
.treetitle { font-size: 12px; font-weight: 700; width: 47px; color: #333; flex: none; }
.tool { display: block; flex: none; margin-left: 20px; }
.tool2 { margin-left: 0; }
.tool3 { margin-left: 13px; }
.tc1 { margin: 0 9px 0 7px; }
.tc2 { margin: 0 0 0 8px; }
.tree { list-style: none; margin: 0; padding: 6px 0 0; }
.row { height: 24px; display: flex; align-items: center; position: relative; font-family: "Noto Sans", "Noto Sans CJK SC", sans-serif; font-size: 12px; letter-spacing: .15px; color: #4c4c4c; white-space: nowrap; }
.ti { display: block; flex: none; width: 16px; }
.ti-c { width: 18px; margin-left: -1px; margin-right: -1px; }
.row span { margin-left: 4px; }
.lv0 { padding-left: 11px; }
.lv1 { padding-left: 30px; }
.lv1 span { margin-left: 5px; }
.lv2 { padding-left: 50px; }
.lv2 span { margin-left: 5px; }
.tri { position: absolute; left: 16px; top: 7px; width: 0; height: 0; border-left: 7px solid #8f8f8f; border-top: 5px solid transparent; border-bottom: 5px solid transparent; }
.tri-open { left: 14px; top: 9px; border-top: 7px solid #8f8f8f; border-left: 5px solid transparent; border-right: 5px solid transparent; border-bottom: 0; }

.canvas { flex: 1; position: relative; min-width: 0; }
.minibar { position: absolute; left: 553px; top: 7px; height: 28px; width: 283px; display: flex; background: #fff; border: 1px solid #d3d5d8; z-index: 1; }
.grip { width: 4px; background: #eeeff1; flex: none; }
.grip:last-child { flex: 1; }
.mini { width: 27px; height: 26px; position: relative; border-left: 1px solid #d3d5d8; display: flex; align-items: center; justify-content: center; flex: none; }
.mini:nth-last-child(2) { border-right: 1px solid #d3d5d8; }
.mini svg { display: block; }
.m-wide { width: 28px; }
.corner { position: absolute; right: 1px; bottom: 1px; width: 0; height: 0; border-left: 3px solid transparent; border-bottom: 3px solid #666; }
.scene { display: block; width: 1393px; height: 663px; position: absolute; left: 0; top: 0; }
.solid { fill: #e3e0d5; }
.wall { fill: #c6c0a8; fill-opacity: .8; }
.tube { fill: #c9c4ad; fill-opacity: .5; }
.tube-in { fill: url(#bandfill); fill-opacity: 1; }
.hole { fill: #efebdf; }
.tube-end { fill: #e6e4dd; fill-opacity: .55; }
.tube-cap { fill: #ece9de; fill-opacity: .75; }
.edges path { fill: none; stroke: #8f9091; stroke-width: 3; }
.axes path { fill: none; stroke: #a0622d; stroke-width: 3; stroke-dasharray: 14 9 4 9; }
.axlbl { font: 36px "Liberation Sans", sans-serif; fill: #a0622d; }
.arrow { fill: url(#arrowfill); }
.note { position: absolute; left: 742px; top: 193px; font-size: 27px; line-height: 36px; color: #abd734; white-space: nowrap; }

.status { height: 21px; flex: none; background: #eeeff1; border-top: 2px solid #969696; display: flex; justify-content: space-between; overflow: hidden; }
.st-left, .st-right { display: flex; align-items: flex-start; padding-top: 7px; }
.st-left { padding-left: 6px; }
.st-right { padding-right: 19px; }
.st-btn { width: 22px; height: 22px; border: 1px solid #c4c6c9; display: flex; justify-content: center; align-items: center; margin-right: 4px; background: #f6f6f7; flex: none; }
.st-btn svg { display: block; }
.st-on { border-top: 2px solid #8a8a8a; }
.st-sep { width: 1px; height: 22px; background: #d6d7da; display: block; flex: none; }
.st-left .st-sep { margin: -1px 0 0 5px; }
.bullet { width: 5px; height: 5px; border-radius: 50%; background: #1a6685; margin: 6px 0 0 8px; flex: none; }
.msg { margin-left: 5px; font-size: 12px; line-height: 17px; color: #333; white-space: nowrap; }
.lights { display: flex; gap: 2px; padding: 7px 0 0 6px; width: 35px; align-items: flex-start; flex: none; }
.lights i { width: 7px; height: 7px; border-radius: 50%; background: #c4c6c9; margin-top: 2px; flex: none; }
.lights .l-on { width: 11px; height: 11px; background: #3fd24a; margin-top: 0; }
.flag { display: block; margin: 2px 22px 0 6px; flex: none; }
.sep-b { margin-right: 3px; }
.binoc { width: 40px; height: 22px; border: 1px solid #c4c6c9; border-radius: 3px 3px 0 0; background: #f6f6f7; display: flex; justify-content: center; align-items: flex-start; padding-top: 2px; margin-right: 2px; flex: none; }
.binoc svg { display: block; }
.select { width: 175px; height: 22px; margin-left: 98px; margin-top: 3px; background: #fff; border: 1px solid #c4c6c9; display: flex; justify-content: space-between; padding-left: 7px; flex: none; line-height: 15px; }
.sel-btn { width: 13px; background: #eeeff1; border-left: 1px solid #c4c6c9; font-weight: 400; display: block; padding-top: 5px; }
.sel-btn .caret { display: block; margin: 0 auto; border-width: 4px 3px 0; border-top-color: #666; }

.watermark { position: absolute; left: 1389px; top: 780px; width: 210px; height: 66px; }
.wm-logo { position: absolute; left: 2px; top: 2px; display: block; }
.wm-text { position: absolute; left: 68px; top: 0; font-size: 30px; line-height: 36px; font-weight: 700; color: #a9dcbd; white-space: nowrap; }
.wm-url { position: absolute; left: 0; right: 5px; top: 45px; height: 21px; padding-left: 58px; font: 16px/17px "Liberation Sans", sans-serif; color: #cfe2e8; background: rgba(255, 255, 255, .55); white-space: nowrap; }
```
